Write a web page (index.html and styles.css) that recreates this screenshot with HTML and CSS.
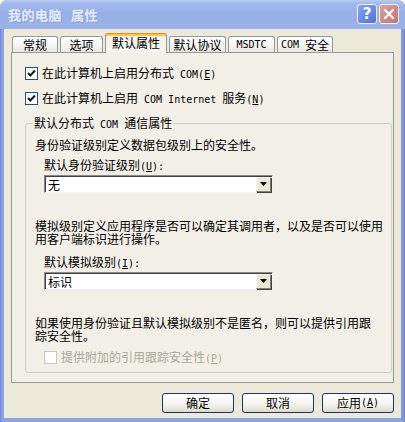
FILE: index.html
```html
<!DOCTYPE html>
<html lang="zh-CN">
<head>
<meta charset="utf-8">
<title>我的电脑 属性</title>
<link rel="stylesheet" href="styles.css">
</head>
<body>
<div class="window">
  <div class="titlebar">
    <span class="title">我的电脑<span class="gap"></span>属性</span>
    <div class="tbtns">
      <span class="tbtn help">?</span>
      <span class="tbtn close"><svg width="12" height="12" viewBox="0 0 12 12"><path d="M2 2 L10 10 M10 2 L2 10" stroke="#fff" stroke-width="2.2" stroke-linecap="round"/></svg></span>
    </div>
  </div>
  <div class="client">
    <div class="tabs">
      <div class="tab w1">常规</div>
      <div class="tab w2">选项</div>
      <div class="tab sel w3">默认属性</div>
      <div class="tab w4">默认协议</div>
      <div class="tab w5"><span class="m">MSDTC</span></div>
      <div class="tab w6"><span class="m">COM&nbsp;</span>安全</div>
    </div>
    <div class="panel">
      <div class="chk">
        <span class="box"><svg width="11" height="11" viewBox="0 0 11 11"><path d="M2 5 L4.3 7.5 L9 2.5" fill="none" stroke="#1a1a1a" stroke-width="2"/></svg></span>
        <span>在此计算机上启用分布式<span class="m">&nbsp;COM(<u>E</u>)</span></span>
      </div>
      <div class="chk">
        <span class="box"><svg width="11" height="11" viewBox="0 0 11 11"><path d="M2 5 L4.3 7.5 L9 2.5" fill="none" stroke="#1a1a1a" stroke-width="2"/></svg></span>
        <span>在此计算机上启用<span class="m">&nbsp;COM Internet&nbsp;</span>服务<span class="m">(<u>N</u>)</span></span>
      </div>
      <fieldset class="group">
        <legend>默认分布式<span class="m">&nbsp;COM&nbsp;</span>通信属性</legend>
        <p class="p1">身份验证级别定义数据包级别上的安全性。</p>
        <p class="lbl lbl1">默认身份验证级别<span class="m">(<u>U</u>):</span></p>
        <div class="combo"><span class="val">无</span><span class="drop"><svg width="7" height="4" viewBox="0 0 7 4"><path d="M0 0 H7 L3.5 4 Z" fill="#000"/></svg></span></div>
        <p class="p2">模拟级别定义应用程序是否可以确定其调用者，以及是否可以使用<br>用客户端标识进行操作。</p>
        <p class="lbl lbl2">默认模拟级别<span class="m">(<u>I</u>):</span></p>
        <div class="combo"><span class="val">标识</span><span class="drop"><svg width="7" height="4" viewBox="0 0 7 4"><path d="M0 0 H7 L3.5 4 Z" fill="#000"/></svg></span></div>
        <p class="p3">如果使用身份验证且默认模拟级别不是匿名，则可以提供引用跟<br>踪安全性。</p>
        <div class="chk dis">
          <span class="box"></span>
          <span>提供附加的引用跟踪安全性<span class="m">(<u>P</u>)</span></span>
        </div>
      </fieldset>
    </div>
    <div class="buttons">
      <span class="btn">确定</span>
      <span class="btn">取消</span>
      <span class="btn">应用<span class="m">(<u>A</u>)</span></span>
    </div>
  </div>
</div>
</body>
</html>
```
FILE: styles.css
```css
* { box-sizing: border-box; }
html, body { margin: 0; padding: 0; }
body {
  width: 405px;
  height: 422px;
  overflow: hidden;
  background: #ffffff;
  font-family: "Noto Sans CJK SC", sans-serif;
  font-size: 12px;
  color: #000;
}
.m {
  font-family: "DejaVu Sans Mono", "Liberation Mono", monospace;
  font-size: 10px;
}
u { text-decoration: underline; }

.window {
  width: 405px;
  height: 422px;
  display: flex;
  flex-direction: column;
  background: linear-gradient(90deg, #6f86d4, #8da2e2 2px, #8da2e2 401px, #6f86d4);
  border-radius: 7px 7px 0 0;
  overflow: hidden;
}
.titlebar {
  height: 29px;
  flex: none;
  display: flex;
  align-items: center;
  justify-content: space-between;
  padding: 0 6px 1px 8px;
  background: linear-gradient(#bccdf2 0, #a2b9ec 3px, #97b0e8 45%, #9ab2e8 100%);
}
.title {
  color: #e6edfa;
  font-weight: bold;
  font-size: 13px;
  letter-spacing: 0.5px;
  text-shadow: 1px 1px 0 #8ba2dc;
  display: flex;
  align-items: center;
}
.title .gap { display: inline-block; width: 9px; }
.tbtns { display: flex; gap: 2px; }
.tbtn {
  width: 20px;
  height: 20px;
  border: 1px solid #eef2fb;
  border-radius: 3px;
  display: flex;
  align-items: center;
  justify-content: center;
}
.help {
  background: linear-gradient(135deg, #86a6ee, #4e74da);
  color: #fff;
  font: bold 15px "DejaVu Sans", sans-serif;
}
.close { background: linear-gradient(135deg, #dba49e, #c2766e); }

.client {
  flex: 1;
  margin: 0 4px 4px;
  background: #ece9d8;
  padding: 4px 7px 5px 7px;
  display: flex;
  flex-direction: column;
}
.tabs {
  display: flex;
  align-items: flex-end;
  gap: 2px;
  height: 19px;
  padding-left: 1px;
  position: relative;
  z-index: 1;
}
.tab {
  height: 16px;
  border: 1px solid #919b9c;
  border-bottom: none;
  border-radius: 3px 3px 0 0;
  background: linear-gradient(#ffffff, #f4f3ee 60%, #e8e6dc);
  display: flex;
  align-items: center;
  justify-content: center;
  line-height: 14px;
}
.tab.sel {
  height: 20px;
  margin-bottom: -1px;
  border-top: 1px solid #e68b2c;
  box-shadow: inset 0 2px 0 #ffc73c;
  background: #f4f3ec;
  padding-bottom: 2px;
}
.w1 { width: 46px; }
.w2 { width: 43px; }
.w3 { width: 62px; }
.w4 { width: 57px; }
.w5 { width: 47px; }
.w6 { width: 56px; }

.panel {
  height: 331px;
  border: 1px solid #919b9c;
  background: #f1efe6;
  padding: 14px 12px 0 13px;
}
.chk {
  display: flex;
  align-items: center;
  height: 13px;
  gap: 4px;
  line-height: 13px;
  white-space: nowrap;
}
.chk + .chk { margin-top: 12px; }
.box {
  width: 13px;
  height: 13px;
  flex: none;
  border: 1px solid #1c5180;
  background: #fff;
  display: flex;
  align-items: center;
  justify-content: center;
}
.chk.dis { margin: 9px 0 0 9px; color: #aca899; }
.chk.dis .box { border-color: #cac8bb; }

.group {
  margin: 11px 0 0;
  border: 1px solid #d0d0bf;
  border-radius: 3px;
  padding: 0 8px 8px 9px;
}
.group legend {
  padding: 0 1px;
  margin-left: -2px;
  line-height: 13px;
}
.group p { margin: 0; white-space: nowrap; }
.p1 { margin-top: 7px !important; line-height: 13px; }
.lbl { line-height: 13px; margin-left: 9px !important; }
.lbl1 { margin-top: 7px !important; }
.lbl2 { margin-top: 10px !important; }
.p2 { margin-top: 26px !important; line-height: 13px; }
.p3 { margin-top: 26px !important; line-height: 13px; }

.combo {
  margin: 2px 0 0 9px;
  width: 229px;
  height: 18px;
  background: #fff;
  border: 1px solid;
  border-color: #8a8a8a #f4f3ee #f4f3ee #8a8a8a;
  box-shadow: inset 1px 1px 0 #404040;
  display: flex;
  align-items: center;
  justify-content: space-between;
  padding: 1px 1px 0 3px;
}
.val { line-height: 14px; }
.drop {
  width: 15px;
  height: 15px;
  background: #ece9d8;
  border: 1px solid;
  border-color: #f4f3ee #808080 #808080 #f4f3ee;
  box-shadow: 1px 1px 0 #404040;
  display: flex;
  align-items: center;
  justify-content: center;
  margin-bottom: 1px;
}

.buttons {
  display: flex;
  justify-content: flex-end;
  gap: 8px;
  margin-top: 10px;
}
.btn {
  width: 72px;
  height: 20px;
  border: 1px solid #1d3566;
  border-radius: 3px;
  background: linear-gradient(#ffffff, #f3f2ec 60%, #dcd8ca);
  display: flex;
  align-items: center;
  justify-content: center;
  line-height: 14px;
}
```
